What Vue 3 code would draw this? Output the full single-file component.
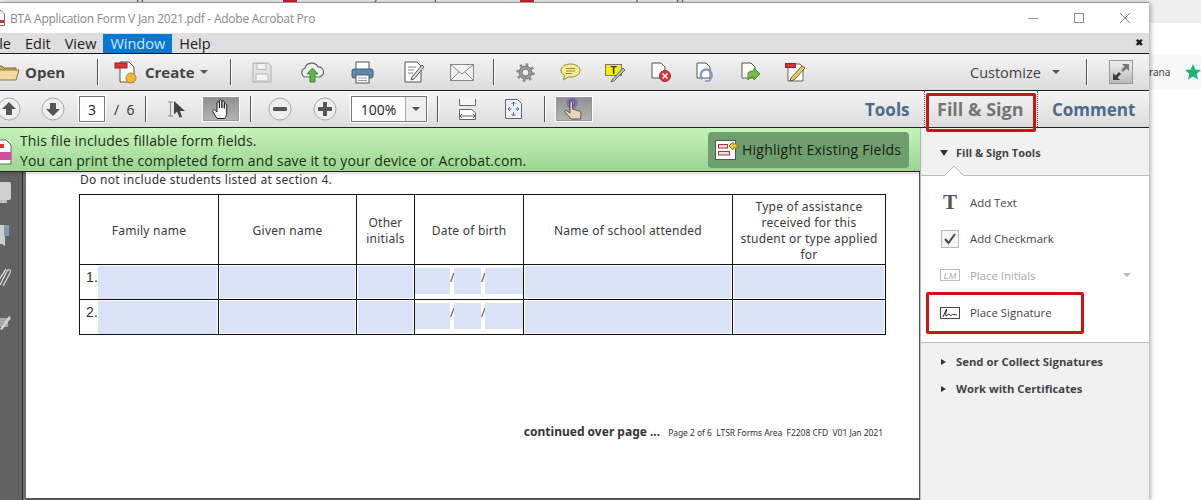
<script setup>
const tabs = [
  { text: 'adobe logo - Search', left: 88 },
  { text: 'What are my contact options?', left: 308 },
  { text: 'Lokesh: how to place signature', left: 548 }
];
const headers = [
  { text: 'Family name' },
  { text: 'Given name' },
  { text: 'Other\ninitials' },
  { text: 'Date of birth' },
  { text: 'Name of school attended' },
  { text: 'Type of assistance\nreceived for this\nstudent or type applied\nfor' }
];
const rows = ['1.', '2.'];
</script>

<template>
  <div class="page">
    <div class="tabs-strip">
      <span v-for="t in tabs" :key="t.text" class="tab-text" :style="{ left: t.left + 'px' }">{{ t.text }}</span>
      <i class="tab-mark m1"></i>
      <i class="tab-mark m2"></i>
    </div>
    <div class="behind-row">
      <span class="behind-text">rana</span>
      <svg width="16" height="16" viewBox="0 0 16 16"><path d="M8 0l2.300 5.400 5.700.5-4.300 3.800 1.300 5.700L8 12.400l-5 3 1.300-5.700L0 5.900l5.700-.5z" fill="#1fb574"/></svg>
    </div>

    <div class="window">
      <header class="titlebar">
        <svg class="title-icon" width="5" height="16" viewBox="0 0 5 16"><path d="M-8 .5h9l3.500 3.500v11.500H-8z" fill="#fff" stroke="#777"/><rect x="-8" y="10" width="12" height="3" fill="#c0392b"/></svg>
        <span class="title-text">BTA Application Form V Jan 2021.pdf - Adobe Acrobat Pro</span>
        <div class="win-controls">
          <svg width="12" height="12" viewBox="0 0 12 12"><path d="M1 6.500h10" stroke="#999"/></svg>
          <svg width="12" height="12" viewBox="0 0 12 12"><rect x="1.500" y="1.500" width="9" height="9" fill="none" stroke="#888"/></svg>
          <svg width="12" height="12" viewBox="0 0 12 12"><path d="M1 1l10 10M11 1L1 11" stroke="#888"/></svg>
        </div>
      </header>

      <nav class="menubar">
        <span class="menu-item first">File</span>
        <span class="menu-item">Edit</span>
        <span class="menu-item">View</span>
        <span class="menu-item active">Window</span>
        <span class="menu-item">Help</span>
        <span class="menu-close">✖</span>
      </nav>

      <div class="toolbar">
        <svg class="i-open" width="28" height="20" viewBox="0 0 28 20"><path d="M1 4h9l2 2h12v3H1z" fill="#c9a95e" stroke="#7a6a3a"/><path d="M1 18L4 8h23l-3 10z" fill="#f2dd9f" stroke="#8a7a46"/></svg>
        <span class="tb-label open-label">Open</span>
        <i class="sep s-open"></i>
        <svg class="i-create" width="24" height="24" viewBox="0 0 24 24"><path d="M6 2h9l5 5v15H6z" fill="#fff" stroke="#555"/><rect x="1" y="3" width="12" height="5" fill="#d33" stroke="#922"/><circle cx="17" cy="18" r="5" fill="#f2b632" stroke="#b8811a"/></svg>
        <span class="tb-label create-label">Create</span>
        <i class="caret c-create"></i>
        <i class="sep s-create"></i>
        <svg class="i-save" width="20" height="21" viewBox="0 0 20 21"><path d="M1 1h15l3 3v16H1z" fill="#e4e4e4" stroke="#b0b0b0"/><rect x="5" y="1.500" width="9" height="6" fill="#f4f4f4" stroke="#b8b8b8"/><rect x="4" y="12" width="12" height="7" fill="#f4f4f4" stroke="#b8b8b8"/></svg>
        <svg class="i-cloud" width="25" height="22" viewBox="0 0 25 22"><path d="M6 16a4.500 4.500 0 0 1-1-8.800A7 7 0 0 1 18 6a5 5 0 0 1 1 10z" fill="#f0f0f0" stroke="#666" stroke-width="1.200"/><path d="M12.500 7l5.500 6h-3v8h-5v-8H7z" fill="#5fb44a" stroke="#3d8a2e"/></svg>
        <svg class="i-print" width="23" height="23" viewBox="0 0 23 23"><rect x="5" y="1" width="13" height="8" fill="#fff" stroke="#555"/><rect x="1" y="8" width="21" height="9" rx="2" fill="#5e88ad" stroke="#3c5c78"/><rect x="5" y="14" width="13" height="8" fill="#fff" stroke="#555"/><path d="M7 17h9M7 19.500h9" stroke="#999"/></svg>
        <svg class="i-edit" width="22" height="22" viewBox="0 0 22 22"><path d="M2 1h12l4 4v16H2z" fill="#fff" stroke="#555"/><path d="M5 6h8M5 9h6M5 12h5" stroke="#888"/><path d="M9 16L19 4l2 2L11 18l-3 1z" fill="#ddd" stroke="#555"/></svg>
        <svg class="i-mail" width="24" height="17" viewBox="0 0 24 17"><rect x="0.500" y="0.500" width="23" height="16" fill="#f1f1f1" stroke="#888"/><path d="M1 1l11 9 11-9M1 16l8-8M23 16l-8-8" fill="none" stroke="#888"/></svg>
        <i class="sep s-mail"></i>
        <svg class="i-gear" width="19" height="19" viewBox="0 0 19 19"><circle cx="9.500" cy="9.500" r="6.500" fill="#9a9a9a" stroke="#777"/><circle cx="9.500" cy="9.500" r="8" fill="none" stroke="#888" stroke-width="2.500" stroke-dasharray="2.600 3.680"/><circle cx="9.500" cy="9.500" r="3.400" fill="#eee" stroke="#777"/></svg>
        <svg class="i-note" width="21" height="18" viewBox="0 0 21 18"><path d="M10.500 1C5 1 1 3.800 1 7.500c0 2.300 1.500 4 3.500 5L3.500 17l5-3.200c.7.100 1.300.2 2 .2C16 14 20 11.200 20 7.500S16 1 10.500 1z" fill="#f6ee8e" stroke="#8e8a3d"/><path d="M6 5.500h9M6 8h9M6 10.500h6" stroke="#8e8a3d"/></svg>
        <svg class="i-tnote" width="21" height="19" viewBox="0 0 21 19"><rect x="0.500" y="1.500" width="16" height="11" fill="#f5f000" stroke="#777"/><text x="8.500" y="10.500" font-size="10" font-family="Liberation Sans, sans-serif" font-weight="700" text-anchor="middle" fill="#333">T</text><path d="M7 17l11-12 2 2L9 18l-3 1z" fill="#bbb" stroke="#666"/></svg>
        <svg class="i-filex" width="20" height="20" viewBox="0 0 20 20"><path d="M1 1h9l4 4v11H1z" fill="#fff" stroke="#555"/><circle cx="14" cy="14" r="5.500" fill="#d13c3c" stroke="#9c2626"/><path d="M11.500 11.500l5 5M16.500 11.500l-5 5" stroke="#fff" stroke-width="1.300"/></svg>
        <svg class="i-filer" width="18" height="20" viewBox="0 0 18 20"><path d="M1 1h9l4 4v11H1z" fill="#fff" stroke="#555"/><path d="M6.500 17A5.500 5.500 0 1 1 14 17" fill="none" stroke="#7f9dbc" stroke-width="2.400"/><path d="M9 19h5v-3" fill="none" stroke="#5d7896"/></svg>
        <svg class="i-filea" width="20" height="20" viewBox="0 0 20 20"><path d="M1 1h9l4 4v11H1z" fill="#fff" stroke="#555"/><path d="M7 11c2-2 4-2 6-2V6l6 6-6 6v-3c-3 0-5 1-6 3z" fill="#7cba4d" stroke="#4d8a2b"/></svg>
        <svg class="i-redit" width="21" height="20" viewBox="0 0 21 20"><path d="M3 2h12l3 3v14H3z" fill="#fff" stroke="#666"/><rect x="0.500" y="1.500" width="10" height="4" fill="#d33" stroke="#922"/><path d="M6 16L17 4l3 2L9 18l-4 1z" fill="#f1c86b" stroke="#7a5a1a"/></svg>
        <span class="customize">Customize</span>
        <i class="caret c-customize"></i>
        <i class="sep s-custom"></i>
        <div class="expand">
          <svg width="22" height="22" viewBox="0 0 22 22"><path d="M12 3h7v7l-2.500-2.500L13 11l-2-2 3.500-3.500z" fill="#777"/><path d="M10 19H3v-7l2.500 2.500L9 11l2 2-3.500 3.500z" fill="#3f3f3f"/></svg>
        </div>
      </div>

      <div class="navbar">
        <svg class="n-up" width="24" height="24" viewBox="0 0 24 24"><circle cx="12" cy="12" r="11" fill="#eee" stroke="#aaa"/><path d="M12 5l7 7h-4v6H9v-6H5z" fill="#555"/></svg>
        <svg class="n-down" width="24" height="24" viewBox="0 0 24 24"><circle cx="12" cy="12" r="11" fill="#eee" stroke="#aaa"/><path d="M12 19l7-7h-4V6H9v6H5z" fill="#555"/></svg>
        <span class="page-input">3</span>
        <span class="page-total">/&nbsp;&nbsp;6</span>
        <i class="sep s-page"></i>
        <svg class="n-select" width="19" height="18" viewBox="0 0 19 18"><path d="M1 2h5M1 16h5M3.500 2v14" stroke="#888" fill="none"/><path d="M7 1l11 10h-5l2 6-2.500 0.500-2.500-6-3 3z" fill="#444"/></svg>
        <div class="btn-on hand-btn">
          <svg width="21" height="22" viewBox="0 0 21 22"><path d="M6 20.500L2 14c-1-1.800 1-3 2.400-1.500L6 14V5c0-1.800 2.400-1.800 2.400 0v5V3c0-1.800 2.500-1.800 2.500 0v7V4c0-1.800 2.400-1.800 2.400 0v6.500V7c0-1.600 2.400-1.600 2.400 0v8c0 2.500-1 4-2 5.500z" fill="#f6f6f6" stroke="#222"/></svg>
        </div>
        <i class="sep s-hand"></i>
        <svg class="n-minus" width="24" height="24" viewBox="0 0 24 24"><circle cx="12" cy="12" r="11" fill="#eee" stroke="#aaa"/><rect x="5" y="10" width="14" height="4" rx="1" fill="#555"/></svg>
        <svg class="n-plus" width="24" height="24" viewBox="0 0 24 24"><circle cx="12" cy="12" r="11" fill="#eee" stroke="#aaa"/><path d="M10 5h4v5h5v4h-5v5h-4v-5H5v-4h5z" fill="#555"/></svg>
        <div class="zoom-box">
          <span class="zoom-value">100%</span>
          <span class="zoom-drop"><i class="caret"></i></span>
        </div>
        <i class="sep s-zoom"></i>
        <svg class="n-fit" width="17" height="21" viewBox="0 0 17 21"><path d="M.5 0v6.500h16V0" fill="#f5f5f5" stroke="#666"/><path d="M.5 10.500h12l4 3v7H.5z" fill="#fff" stroke="#666"/><path d="M1 17h15M3 15l-2 2 2 2M14 15l2 2-2 2" fill="none" stroke="#4a6f98"/></svg>
        <svg class="n-full" width="17" height="20" viewBox="0 0 17 20"><path d="M.5.500h12l4 4v15H.5z" fill="#eef1f8" stroke="#666"/><path d="M8.500 3v4M8.500 13v4M3 10h3.500M10.500 10H14M6.500 5l2-2 2 2M6.500 15l2 2 2-2M5 8l-2 2 2 2M12 8l2 2-2 2" fill="none" stroke="#4a6f98"/></svg>
        <i class="sep s-fit"></i>
        <div class="btn-on touch-btn">
          <svg width="22" height="24" viewBox="0 0 22 24"><circle cx="9" cy="6" r="5" fill="none" stroke="#8a62b8" stroke-width="1.300"/><circle cx="9" cy="6" r="3" fill="none" stroke="#6a48a0" stroke-width="1.300"/><path d="M7 6c0-1.600 2.500-1.600 2.500 0v6l7 2c2 1 1.500 4 1 8H8L2 15c-.6-1.400 1-2.300 2-1l3 2z" fill="#e8d6bc" stroke="#555"/></svg>
        </div>
        <span class="pane-tab tools">Tools</span>
        <span class="pane-tab fill">Fill &amp; Sign</span>
        <span class="pane-tab comment">Comment</span>
        <div class="tab-dots"></div>
        <div class="redbox tab-box"></div>
      </div>

      <div class="workspace">
        <aside class="rail">
          <svg class="r-pages" width="12" height="22" viewBox="0 0 12 22"><rect x="-4" y="0" width="15" height="18" rx="2" fill="#cfcfcf"/><rect x="-4" y="18" width="11" height="3" fill="#bdbdbd"/></svg>
          <svg class="r-book" width="9" height="21" viewBox="0 0 9 21"><path d="M0 0h5v21l-3-2H0z" fill="#cfcfcf"/><rect x="4" y="0" width="5" height="11" fill="#7f9ab5"/></svg>
          <svg class="r-clip" width="11" height="20" viewBox="0 0 11 20"><path d="M0 17L7 3c1.500-3 4.500-1 3 2L3 18M-1 12L6 1" fill="none" stroke="#cfcfcf" stroke-width="1.400"/></svg>
          <svg class="r-sign" width="12" height="16" viewBox="0 0 12 16"><path d="M0 3h8v9H0z" fill="#a8a8a8"/><path d="M0 14L9 1l2 2L2 15z" fill="#d4d4d4"/></svg>
        </aside>
        <div class="rail-edge"></div>

        <main class="doc">
          <div class="notice">
            <svg class="notice-icon" width="12" height="26" viewBox="0 0 12 26"><path d="M-6 1h12l5 5v19H-6z" fill="#fff" stroke="#666"/><rect x="-6" y="5" width="10" height="4" fill="#d33"/><rect x="-6" y="13" width="17" height="8" fill="#cf4ea5"/></svg>
            <p class="notice-text">This file includes fillable form fields.<br>You can print the completed form and save it to your device or Acrobat.com.</p>
            <button class="highlight-btn">
              <svg width="23" height="20" viewBox="0 0 23 20"><rect x="0.500" y="0.500" width="20" height="19" fill="#fff" stroke="#555"/><rect x="3.500" y="4.500" width="9" height="3.500" fill="#f2dede" stroke="#a33"/><rect x="3.500" y="11.500" width="11" height="3.500" fill="#f2dede" stroke="#a33"/><path d="M14 6l4-4v2h4v4h-4v2z" fill="#f5c542" stroke="#9a7a1a"/></svg>
              <span>Highlight Existing Fields</span>
            </button>
          </div>

          <p class="doc-note">Do not include students listed at section 4.</p>

          <div class="form-table">
            <div v-for="h in headers" :key="h.text" class="th">{{ h.text }}</div>
            <template v-for="row in rows" :key="row">
              <div class="td first-cell">
                <span class="row-num">{{ row }}</span>
                <span class="field"></span>
              </div>
              <div class="td"><span class="field"></span></div>
              <div class="td"><span class="field"></span></div>
              <div class="td dob">
                <span class="part p1"></span><span class="slash">/</span><span class="part p2"></span><span class="slash">/</span><span class="part p3"></span>
              </div>
              <div class="td"><span class="field"></span></div>
              <div class="td"><span class="field"></span></div>
            </template>
          </div>

          <div class="doc-foot">
            <b>continued over page ...</b>
            <span>Page 2 of 6&nbsp; LTSR Forms Area&nbsp; F2208 CFD&nbsp; V01 Jan 2021</span>
          </div>
        </main>

        <aside class="panel">
          <div class="panel-head">
            <span class="tri-down"></span>
            <span>Fill &amp; Sign Tools</span>
            <svg class="notch" width="20" height="10" viewBox="0 0 20 10"><path d="M0 10L10 0l10 10" fill="#fff" stroke="#bbb"/></svg>
          </div>
          <ul class="tool-list">
            <li>
              <span class="tool-icon t-glyph">T</span>
              <span>Add Text</span>
            </li>
            <li>
              <svg class="tool-icon" width="18" height="18" viewBox="0 0 18 18"><rect x="0.500" y="0.500" width="17" height="17" fill="#f4f4f4" stroke="#bbb"/><path d="M4 9l3.500 4L14 4" fill="none" stroke="#444" stroke-width="2"/></svg>
              <span>Add Checkmark</span>
            </li>
            <li class="disabled">
              <svg class="tool-icon" width="20" height="12" viewBox="0 0 20 12"><rect x="0.500" y="0.500" width="19" height="11" fill="#fff" stroke="#bbb"/><text x="10" y="9.500" font-size="9" font-style="italic" font-family="Liberation Sans, sans-serif" text-anchor="middle" fill="#aaa">LM</text></svg>
              <span>Place Initials</span>
              <i class="caret initials-caret"></i>
            </li>
            <li class="sign-row">
              <svg class="tool-icon" width="20" height="12" viewBox="0 0 20 12"><rect x="0.500" y="0.500" width="19" height="11" fill="#fff" stroke="#444"/><path d="M3 10L6.500 2c0 2-1.500 6-.5 7 1 .5 2-2.500 3-2s1 2 2 1.500 2-1.500 3-1 2 .5 3 .2" fill="none" stroke="#222"/></svg>
              <span>Place Signature</span>
              <div class="redbox sign-box"></div>
            </li>
          </ul>
          <div class="panel-more">
            <div class="more-row"><span class="tri-right"></span>Send or Collect Signatures</div>
            <div class="more-row"><span class="tri-right"></span>Work with Certificates</div>
          </div>
        </aside>
      </div>
    </div>
  </div>
</template>

<style>
html, body { margin: 0; background: #fff; overflow: hidden; }
</style>

<style scoped>
.page {
  position: relative;
  width: 1201px;
  height: 500px;
  overflow: hidden;
  background: #fff;
  font-family: "Open Sans", "Noto Sans", sans-serif;
}
.tabs-strip {
  position: absolute;
  left: 0;
  top: 0;
  width: 1201px;
  height: 23px;
  background: #efefef;
  overflow: hidden;
}
.tab-text {
  position: absolute;
  top: -12px;
  font-size: 12px;
  line-height: 16px;
  white-space: nowrap;
  color: #444;
}
.tab-mark { position: absolute; top: 0; width: 14px; height: 3px; background: #c9252c; }
.m1 { left: 283px; }
.m2 { left: 520px; }
.behind-row {
  position: absolute;
  left: 1149px;
  top: 54px;
  width: 52px;
  height: 36px;
  background: #f8f8f8;
  display: flex;
  align-items: center;
  font-family: "Noto Sans", sans-serif;
  font-size: 10px;
  color: #444;
}
.behind-text { margin-right: 15px; }

.window {
  position: absolute;
  left: 0;
  top: 3px;
  width: 1149px;
  height: 497px;
  background: #fff;
  box-shadow: 0 -1px 0 #999, 1px 0 5px rgba(0, 0, 0, 0.4);
  display: flex;
  flex-direction: column;
}
.titlebar {
  height: 30px;
  flex: none;
  display: flex;
  align-items: center;
  background: #fff;
}
.title-text {
  font-size: 12px;
  letter-spacing: -0.25px;
  color: #8a8a8a;
  margin-left: 5px;
}
.win-controls {
  margin-left: auto;
  display: flex;
  gap: 34px;
  padding-right: 18px;
}
.menubar {
  height: 20px;
  flex: none;
  background: #dedede;
  display: flex;
  align-items: center;
  font-size: 14.500px;
  color: #222;
  position: relative;
  border-bottom: 1px solid #1a1a1a;
  overflow: hidden;
}
.menu-item { padding: 0 7px; line-height: 19px; }
.menu-item.first { margin-left: -19px; }
.menu-item.active { background: #0a78d0; color: #cfe8ff; }
.menu-close { position: absolute; right: 6px; top: 2px; font-size: 10px; color: #111; }

.toolbar, .navbar {
  flex: none;
  display: flex;
  align-items: center;
  position: relative;
  border-bottom: 1px solid #222;
  background: linear-gradient(#f4f4f4, #dcdcdc);
}
.toolbar { height: 36px; }
.navbar { height: 36px; }
.tb-label { font-size: 15px; font-weight: 700; color: #444; }
.sep {
  flex: none;
  width: 1px;
  height: 26px;
  background: #555;
  box-shadow: 1px 0 0 #fff;
}
.caret {
  flex: none;
  width: 0;
  height: 0;
  border-left: 4px solid transparent;
  border-right: 4px solid transparent;
  border-top: 4px solid #555;
}
svg { flex: none; }
.i-open { margin-left: -8px; }
.open-label { margin-left: 5px; width: 40px; }
.s-open { margin-left: 32px; }
.i-create { margin-left: 16px; }
.create-label { margin-left: 7px; width: 50px; }
.c-create { margin-left: 5px; }
.s-create { margin-left: 22px; }
.i-save { margin-left: 21px; }
.i-cloud { margin-left: 28px; }
.i-print { margin-left: 26px; }
.i-edit { margin-left: 29px; }
.i-mail { margin-left: 25px; }
.s-mail { margin-left: 19px; }
.i-gear { margin-left: 22px; }
.i-note { margin-left: 25px; }
.i-tnote { margin-left: 24px; }
.i-filex { margin-left: 25px; }
.i-filer { margin-left: 25px; }
.i-filea { margin-left: 27px; }
.i-redit { margin-left: 24px; }
.customize { margin-left: 164px; font-size: 14.500px; color: #444; width: 74px; white-space: nowrap; }
.c-customize { margin-left: 8px; }
.s-custom { margin-left: 26px; }
.expand {
  margin-left: 22px;
  width: 24px;
  height: 24px;
  border: 1px solid #999;
  box-sizing: border-box;
  background: linear-gradient(#eee, #bbb);
  display: flex;
  align-items: center;
  justify-content: center;
}

.n-up { margin-left: -3px; }
.n-down { margin-left: 20px; }
.page-input, .zoom-box {
  box-sizing: border-box;
  height: 26px;
  background: #fff;
  border: 1px solid #777;
  box-shadow: 0 0 0 1px #fff;
  font-size: 14px;
  color: #222;
}
.page-input {
  margin-left: 14px;
  width: 26px;
  display: flex;
  align-items: center;
  justify-content: center;
}
.page-total { margin-left: 9px; width: 31px; font-size: 14px; color: #333; }
.n-select { margin-left: 21px; }
.btn-on {
  flex: none;
  box-sizing: border-box;
  width: 38px;
  height: 26px;
  background: linear-gradient(#8f8f8f, #b5b5b5);
  border: 1px solid #fff;
  outline: 1px solid #999;
  outline-offset: -2px;
  display: flex;
  align-items: center;
  justify-content: center;
}
.hand-btn { margin-left: 16px; }
.s-hand { margin-left: 10px; }
.n-minus { margin-left: 17px; }
.n-plus { margin-left: 21px; }
.zoom-box { margin-left: 14px; width: 76px; display: flex; align-items: center; }
.zoom-value { width: 53px; text-align: center; }
.zoom-drop {
  flex: 1;
  height: 100%;
  border-left: 1px solid #aaa;
  background: #efefef;
  display: flex;
  align-items: center;
  justify-content: center;
}
.s-zoom { margin-left: 10px; }
.n-fit { margin-left: 21px; }
.n-full { margin-left: 29px; }
.s-fit { margin-left: 22px; }
.touch-btn { margin-left: 10px; }
.pane-tab { white-space: nowrap; font-size: 17px; font-weight: 700; color: #4d6a8a; }
.pane-tab.tools { margin-left: 272px; width: 44px; }
.pane-tab.fill { margin-left: 28px; width: 86px; font-size: 18px; color: #757575; }
.pane-tab.comment { margin-left: 29px; width: 82px; }
.tab-dots {
  position: absolute;
  left: 924px;
  top: 0;
  width: 114px;
  height: 36px;
  box-sizing: border-box;
  border-left: 1px dotted #555;
  border-right: 1px dotted #555;
}
.redbox {
  position: absolute;
  box-sizing: border-box;
  border: 3px solid #cc1414;
  border-radius: 2px;
  pointer-events: none;
}
.tab-box { left: 926px; top: 2px; width: 110px; height: 39px; z-index: 3; }

.workspace {
  flex: 1;
  min-height: 0;
  display: flex;
}
.rail {
  flex: none;
  width: 22px;
  background: #626262;
  display: flex;
  flex-direction: column;
  padding-top: 54px;
}
.rail svg { display: block; }
.r-book { margin-top: 21px; }
.r-clip { margin-top: 22px; }
.r-sign { margin-top: 27px; }
.rail-edge {
  flex: none;
  width: 4px;
  box-sizing: border-box;
  background: #6e6e6e;
  border-left: 1px solid #2a2a2a;
}

.doc {
  flex: 1;
  min-width: 0;
  position: relative;
  background: #fff;
  border-bottom: 2px solid #555;
  border-right: 1px solid #555;
}
.notice {
  position: absolute;
  left: -26px;
  top: 0;
  width: 920px;
  height: 44px;
  box-sizing: border-box;
  display: flex;
  align-items: center;
  background: linear-gradient(#c6f3bb, #9dd592);
  border-bottom: 1px solid #222;
  box-shadow: 0 2px 3px rgba(0, 0, 0, 0.15);
  z-index: 2;
}
.notice-icon { margin-top: 4px; }
.notice-text {
  margin: 2px 0 0 8px;
  font-size: 14px;
  line-height: 20px;
  letter-spacing: 0.12px;
  color: #1b2e18;
  white-space: nowrap;
}
.highlight-btn {
  margin-left: auto;
  margin-right: 11px;
  width: 201px;
  height: 36px;
  border: 0;
  border-radius: 4px;
  padding: 0 0 0 7px;
  background: #6f9e6e;
  display: flex;
  align-items: center;
  gap: 4px;
  font-family: inherit;
  font-size: 14px;
  letter-spacing: 0.25px;
  color: #142212;
  white-space: nowrap;
}
.doc-note {
  margin: 0;
  padding: 44px 0 0 54px;
  font-family: "Noto Sans", sans-serif;
  font-size: 12px;
  line-height: 16px;
  letter-spacing: 0.3px;
  color: #333;
}
.form-table {
  margin: 6px 0 0 53px;
  width: 807px;
  box-sizing: border-box;
  display: grid;
  grid-template-columns: 139px 138px 58px 109px 209px 153px;
  grid-template-rows: 70px 35px 35px;
  border-top: 1px solid #111;
  border-left: 1px solid #111;
  font-family: "Noto Sans", sans-serif;
  font-size: 12px;
  letter-spacing: 0.25px;
  color: #3a3a3a;
}
.th, .td {
  box-sizing: border-box;
  border-right: 1px solid #111;
  border-bottom: 1px solid #111;
}
.th {
  display: flex;
  align-items: center;
  justify-content: center;
  text-align: center;
  line-height: 16px;
  padding-top: 2px;
  white-space: pre-line;
}
.td { padding: 1px; display: flex; position: relative; }
.field { flex: 1; background: #dbe3f8; }
.first-cell { padding: 1px 1px 0 0; }
.row-num {
  width: 18px;
  flex: none;
  padding-left: 6px;
  box-sizing: border-box;
  font-family: "Liberation Sans", sans-serif;
  font-size: 14px;
  line-height: 23px;
  color: #333;
}
.dob { padding: 3px 0 5px; align-items: stretch; }
.part { background: #dbe3f8; }
.p1 { width: 35px; }
.p2 { width: 27px; }
.p3 { flex: 1; }
.slash { width: 4px; font-size: 12px; line-height: 20px; color: #444; text-align: center; }
.doc-foot {
  margin: 88px 36px 0 0;
  display: flex;
  justify-content: flex-end;
  align-items: baseline;
  font-family: "Noto Sans", sans-serif;
  color: #333;
}
.doc-foot b { font-size: 12px; margin-right: 8px; }
.doc-foot span { font-size: 8.500px; letter-spacing: -0.05px; }

.panel {
  flex: none;
  width: 229px;
  background: #f1f1f1;
  border-left: 1px solid #bbb;
  box-sizing: border-box;
  font-family: "Open Sans", "Noto Sans", sans-serif;
  font-size: 12px;
  color: #444;
}
.panel-head {
  position: relative;
  height: 48px;
  box-sizing: border-box;
  padding: 2px 0 0 19px;
  display: flex;
  align-items: center;
  gap: 8px;
  font-size: 11px;
  font-weight: 700;
  border-bottom: 1px solid #bbb;
}
.tri-down {
  width: 0;
  height: 0;
  border-left: 4px solid transparent;
  border-right: 4px solid transparent;
  border-top: 6px solid #333;
}
.notch { position: absolute; left: 23px; bottom: -1px; }
.tool-list {
  list-style: none;
  margin: 0;
  padding: 8px 0 12px;
  background: #fff;
  border-bottom: 1px solid #bbb;
}
.tool-list li {
  position: relative;
  height: 36.500px;
  box-sizing: border-box;
  display: flex;
  align-items: center;
  font-size: 11.400px;
  color: #444;
}
.tool-list li.sign-row { padding-top: 2px; }
.tool-icon {
  flex: none;
  margin-left: 19px;
  margin-right: 10px;
}
.t-glyph {
  width: 20px;
  text-align: center;
  font-family: "Liberation Serif", serif;
  font-size: 21px;
  font-weight: 700;
  color: #555;
}
.tool-list li:nth-child(2) .tool-icon { margin-left: 20px; margin-right: 11px; }
.tool-list li.disabled { color: #aaa; }
.initials-caret { position: absolute; left: 202px; border-top-color: #bbb; }
.sign-box { left: 5px; top: -2px; width: 158px; height: 42px; }
.panel-more { padding-top: 5px; }
.more-row {
  height: 27px;
  display: flex;
  align-items: center;
  padding-left: 20px;
  gap: 10px;
  font-size: 11.300px;
  font-weight: 700;
  color: #444;
}
.tri-right {
  width: 0;
  height: 0;
  border-top: 3.500px solid transparent;
  border-bottom: 3.500px solid transparent;
  border-left: 5px solid #333;
}
</style>
